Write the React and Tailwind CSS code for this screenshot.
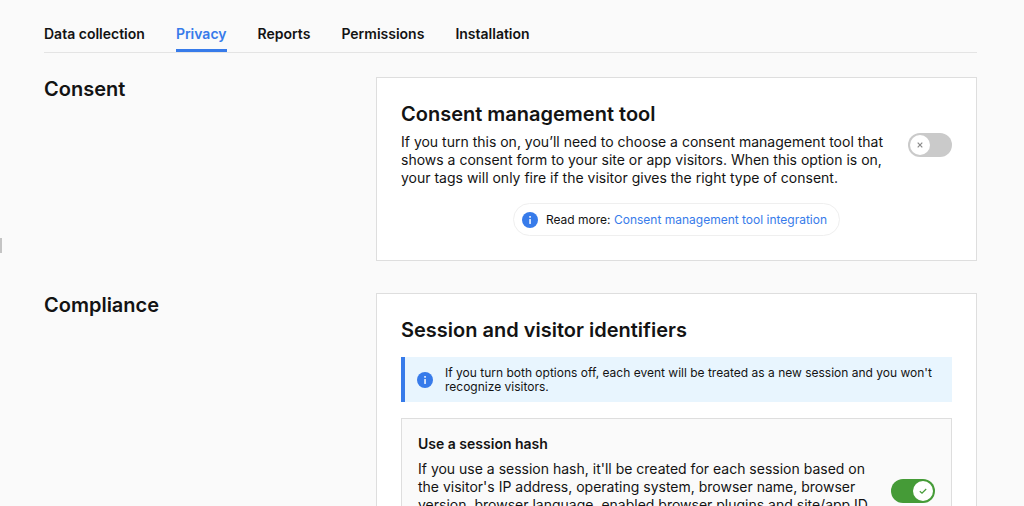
import React, { useState } from "react";
import clsx from "clsx";

const TABS = ["Data collection", "Privacy", "Reports", "Permissions", "Installation"];

const InfoIcon = () => (
    <svg width="16" height="16" viewBox="0 0 16 16" className="shrink-0" aria-hidden="true">
        <circle cx="8" cy="8" r="8" fill="#377bea" />
        <rect x="7.2" y="4" width="1.7" height="1.7" rx="0.4" fill="#fff" />
        <rect x="7.3" y="6.9" width="1.5" height="5" rx="0.3" fill="#fff" />
    </svg>
);

const Toggle = ({ label, checked, onChange }) => (
    <label className="relative block h-6 w-11 shrink-0 cursor-pointer">
        <input
            type="checkbox"
            role="switch"
            aria-label={label}
            checked={checked}
            onChange={(e) => onChange(e.target.checked)}
            className="peer sr-only"
        />
        <span
            className={clsx(
                "flex h-6 w-11 items-center rounded-full p-0.5 peer-focus-visible:ring-2",
                checked ? "justify-end bg-[#459b37]" : "justify-start bg-[#cacaca]"
            )}
        >
            <span className="flex size-5 items-center justify-center rounded-full bg-white">
                {checked ? (
                    <svg width="8" height="8" viewBox="0 0 8 8" fill="none" stroke="#459b37" strokeWidth="1.2">
                        <path d="M0.8 4.2 L3 6.2 L7.2 2" />
                    </svg>
                ) : (
                    <svg width="8" height="8" viewBox="0 0 8 8" fill="none" stroke="#8a8a8a" strokeWidth="1.2">
                        <path d="M1.7 1.7 L6.3 6.3 M6.3 1.7 L1.7 6.3" />
                    </svg>
                )}
            </span>
        </span>
    </label>
);

const Section = ({ title, children }) => (
    <section className="flex items-start">
        <h2 className="flex-1 text-xl leading-6 font-semibold">{title}</h2>
        <div className="w-[601px] max-w-[65%] border border-[#dedede] bg-white p-6">{children}</div>
    </section>
);

const App = () => {
    const [activeTab, setActiveTab] = useState("Privacy");
    const [consentOn, setConsentOn] = useState(false);
    const [sessionHashOn, setSessionHashOn] = useState(true);

    return (
        <div className="relative h-screen overflow-hidden bg-[#fafafa] pt-6 pr-[47px] pl-11 font-['Inter',sans-serif] text-[#131313]">
            <div className="absolute bottom-1/2 left-0 h-[15px] w-0.5 bg-[#c4c4c4]"></div>

            <nav className="flex gap-[31px] border-b border-[#e4e4e4]">
                {TABS.map((tab) => (
                    <button
                        key={tab}
                        onClick={() => setActiveTab(tab)}
                        className={clsx(
                            "cursor-pointer border-b-3 pb-[5px] text-sm leading-5 font-semibold",
                            tab === activeTab ? "border-[#377bea] text-[#377bea]" : "border-transparent"
                        )}
                    >
                        {tab}
                    </button>
                ))}
            </nav>

            <main className="mt-6 flex flex-col gap-8">
                <Section title="Consent">
                    <div className="flex items-center gap-4">
                        <div className="flex-1">
                            <h3 className="mb-[7px] text-xl leading-6 font-semibold">Consent management tool</h3>
                            <p className="text-sm leading-[18px]">
                                If you turn this on, you’ll need to choose a consent management tool that shows a
                                consent form to your site or app visitors. When this option is on, your tags will only
                                fire if the visitor gives the right type of consent.
                            </p>
                        </div>
                        <Toggle label="Consent management tool" checked={consentOn} onChange={setConsentOn} />
                    </div>
                    <div className="mt-4 flex justify-center">
                        <div className="flex h-[33px] items-center gap-2 rounded-full border border-[#efefef] pr-3 pl-2 text-xs">
                            <InfoIcon />
                            <p>
                                Read more:{" "}
                                <a href="#consent-integration" className="text-[#377bea]">
                                    Consent management tool integration
                                </a>
                            </p>
                        </div>
                    </div>
                </Section>

                <Section title="Compliance">
                    <h3 className="text-xl leading-6 font-semibold">Session and visitor identifiers</h3>
                    <div className="mt-[15px] flex items-center gap-3 border-l-4 border-[#377bea] bg-[#e8f5fe] pt-[9px] pr-4 pb-2 pl-3 text-xs leading-[14px]">
                        <InfoIcon />
                        <p>
                            If you turn both options off, each event will be treated as a new session and you won't
                            recognize visitors.
                        </p>
                    </div>
                    <div className="mt-4 flex items-center gap-4 border border-[#dedede] bg-[#fafafa] p-4">
                        <div className="min-h-[112px] flex-1">
                            <h4 className="mb-[7px] text-sm leading-[18px] font-semibold">Use a session hash</h4>
                            <p className="text-sm leading-[18px]">
                                If you use a session hash, it'll be created for each session based on the visitor's IP
                                address, operating system, browser name, browser version, browser language, enabled
                                browser plugins and site/app ID.
                            </p>
                        </div>
                        <Toggle label="Use a session hash" checked={sessionHashOn} onChange={setSessionHashOn} />
                    </div>
                </Section>
            </main>
        </div>
    );
};

export default App;
